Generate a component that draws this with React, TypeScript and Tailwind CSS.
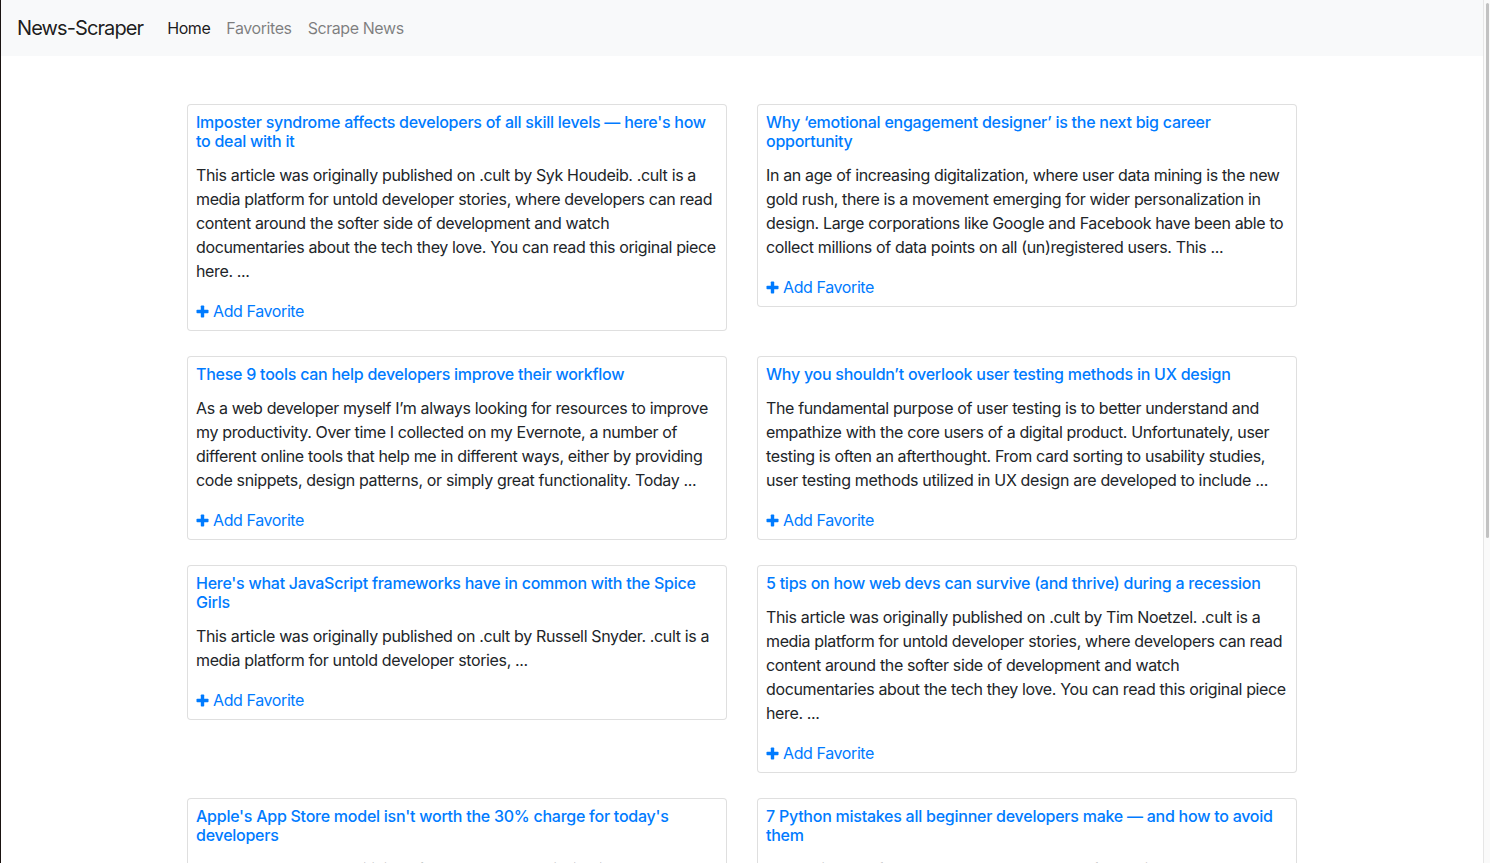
const articles = [
  {
    title: "Imposter syndrome affects developers of all skill levels — here's how to deal with it",
    body: 'This article was originally published on .cult by Syk Houdeib. .cult is a media platform for untold developer stories, where developers can read content around the softer side of development and watch documentaries about the tech they love. You can read this original piece here. ...',
  },
  {
    title: 'Why ‘emotional engagement designer’ is the next big career opportunity',
    body: 'In an age of increasing digitalization, where user data mining is the new gold rush, there is a movement emerging for wider personalization in design. Large corporations like Google and Facebook have been able to collect millions of data points on all (un)registered users. This ...',
  },
  {
    title: 'These 9 tools can help developers improve their workflow',
    body: 'As a web developer myself I’m always looking for resources to improve my productivity. Over time I collected on my Evernote, a number of different online tools that help me in different ways, either by providing code snippets, design patterns, or simply great functionality. Today ...',
  },
  {
    title: 'Why you shouldn’t overlook user testing methods in UX design',
    body: 'The fundamental purpose of user testing is to better understand and empathize with the core users of a digital product. Unfortunately, user testing is often an afterthought. From card sorting to usability studies, user testing methods utilized in UX design are developed to include ...',
  },
  {
    title: "Here's what JavaScript frameworks have in common with the Spice Girls",
    body: 'This article was originally published on .cult by Russell Snyder. .cult is a media platform for untold developer stories, ...',
  },
  {
    title: '5 tips on how web devs can survive (and thrive) during a recession',
    body: 'This article was originally published on .cult by Tim Noetzel. .cult is a media platform for untold developer stories, where developers can read content around the softer side of development and watch documentaries about the tech they love. You can read this original piece here. ...',
  },
  {
    title: "Apple's App Store model isn't worth the 30% charge for today's developers",
    body: 'Apple has long been criticized for the 30% commission it takes on app sales and in-app purchases, and developers are starting to push back. ...',
  },
  {
    title: '7 Python mistakes all beginner developers make — and how to avoid them',
    body: 'Python is one of the most popular languages for beginners, but there are a few common mistakes that almost everyone makes when starting out. ...',
  },
];

function PlusIcon() {
  return (
    <svg width="13" height="13" viewBox="0 0 13 13" className="shrink-0">
      <rect x="4.8" y="0.5" width="3.4" height="12" rx="0.8" fill="currentColor" />
      <rect x="0.5" y="4.8" width="12" height="3.4" rx="0.8" fill="currentColor" />
    </svg>
  );
}

function ArticleCard({ title, body }: { title: string; body: string }) {
  return (
    <div className="border border-black/[.125] rounded px-2 pt-2 pb-[7px] bg-white">
      <a className="block text-[16px] font-medium leading-[19px] tracking-[-0.25px] text-[#007bff] mb-3">{title}</a>
      <p className="text-[16px] leading-6 tracking-[-0.36px] text-[#212529] mb-4">{body}</p>
      <a className="flex items-center gap-1 text-[16px] leading-6 tracking-[-0.4px] text-[#007bff]">
        <PlusIcon />
        Add Favorite
      </a>
    </div>
  );
}

export default function App() {
  return (
    <div
      className="flex h-screen overflow-hidden bg-white"
      style={{ fontFamily: 'Inter, "Noto Sans", "Liberation Sans", sans-serif' }}
    >
      {/* dark window edge */}
      <div className="w-px shrink-0 bg-[#1a1311]" />

      <div className="flex-1 min-w-0">
        {/* Navbar */}
        <nav className="h-14 bg-[#f8f9fa] flex items-center px-4">
          <span className="text-[20px] leading-[30px] tracking-[-0.9px] text-black/90 mr-4">News-Scraper</span>
          <div className="flex items-center text-[16px] tracking-[-0.42px]">
            <a className="px-2 text-black/90">Home</a>
            <a className="px-2 text-black/50">Favorites</a>
            <a className="px-2 text-black/50">Scrape News</a>
          </div>
        </nav>

        {/* Articles */}
        <main className="w-[1110px] mx-auto mt-12 grid grid-cols-2 gap-x-[30px] gap-y-[25px] items-start">
          {articles.map((a) => (
            <ArticleCard key={a.title} title={a.title} body={a.body} />
          ))}
        </main>
      </div>

      {/* scrollbar */}
      <div className="w-[7px] shrink-0 bg-[#fafafa] border-l border-[#e6e6e6] pt-[3px] pl-[2px]">
        <div className="w-[3px] h-[535px] rounded-full bg-[#c2c2c2]" />
      </div>
    </div>
  );
}
